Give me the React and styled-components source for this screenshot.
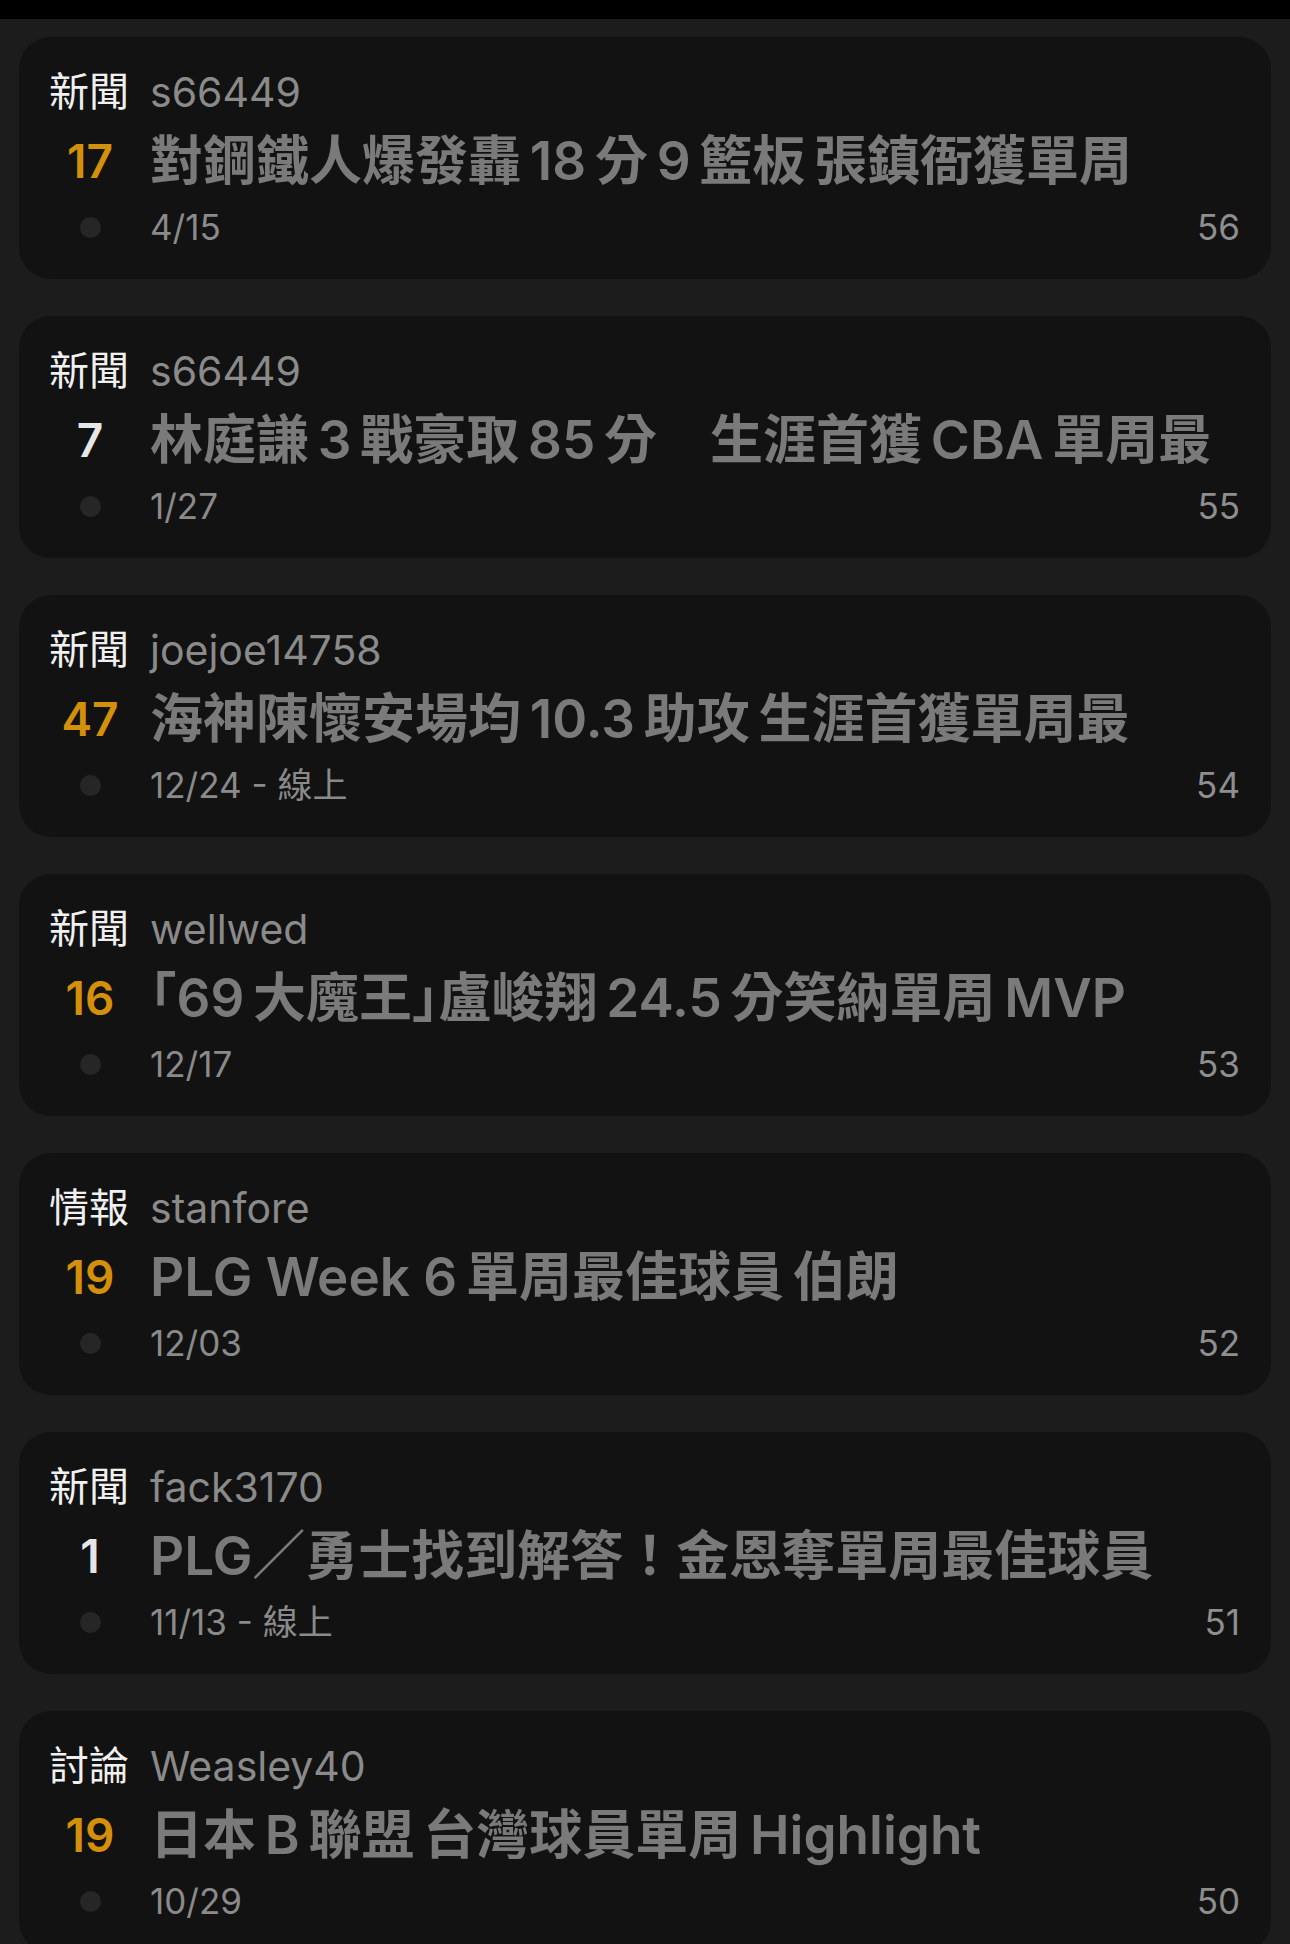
import React from "react";
import styled, { createGlobalStyle } from "styled-components";

const GlobalStyle = createGlobalStyle`
  html, body {
    margin: 0;
    padding: 0;
    background: #1c1c1c;
  }
  body {
    font-family: Inter, "Noto Sans CJK TC", "Noto Sans", sans-serif;
    -webkit-font-smoothing: antialiased;
  }
`;

const Page = styled.div`
  min-height: 1944px;
  background: #1c1c1c;
`;

const TopBar = styled.div`
  height: 19px;
  background: #000;
`;

const List = styled.div`
  display: flex;
  flex-direction: column;
  gap: 37px;
  padding: 18px 19px;
`;

const Card = styled.div`
  display: grid;
  grid-template-columns: 82px 1fr;
  grid-template-rows: 54px 64px 48px;
  column-gap: 19px;
  row-gap: 10px;
  height: 242px;
  box-sizing: border-box;
  padding: 28px 31px 0 30px;
  background: #121212;
  border-radius: 32px;
`;

const Category = styled.div`
  font-size: 40px;
  line-height: 54px;
  color: #f0f0f0;
  white-space: nowrap;
`;

const User = styled.div`
  font-size: 41px;
  line-height: 54px;
  color: #8a8a8a;
  white-space: nowrap;
`;

const Rank = styled.div`
  text-align: center;
  font-size: 46px;
  line-height: 64px;
  font-weight: 600;
  color: ${(p) => (p.$hot ? "#d4900b" : "#e6e6e6")};
`;

const Title = styled.div`
  font-size: 53px;
  line-height: 64px;
  font-weight: 600;
  color: #7a7a7a;
  white-space: pre;
  overflow: hidden;
`;

const Bracket = styled.span`
  font-feature-settings: "halt";
`;

const DotCell = styled.div`
  display: flex;
  align-items: center;
  justify-content: center;
`;

const Dot = styled.span`
  width: 21px;
  height: 21px;
  border-radius: 50%;
  background: #262626;
`;

const MetaRow = styled.div`
  display: flex;
  align-items: center;
  justify-content: space-between;
  font-size: 35px;
  line-height: 48px;
  color: #8a8a8a;
`;

const Count = styled.span`
  color: #8e8e8e;
`;

const items = [
  { cat: "新聞", user: "s66449", rank: 17, hot: true, title: "對鋼鐵人爆發轟 18 分 9 籃板 張鎮衙獲單周", date: "4/15", count: 56 },
  { cat: "新聞", user: "s66449", rank: 7, hot: false, title: "林庭謙 3 戰豪取 85 分　生涯首獲 CBA 單周最", date: "1/27", count: 55 },
  { cat: "新聞", user: "joejoe14758", rank: 47, hot: true, title: "海神陳懷安場均 10.3 助攻 生涯首獲單周最", date: "12/24 - 線上", count: 54 },
  { cat: "新聞", user: "wellwed", rank: 16, hot: true, title: "「69 大魔王」盧峻翔 24.5 分笑納單周 MVP", date: "12/17", count: 53 },
  { cat: "情報", user: "stanfore", rank: 19, hot: true, title: "PLG Week 6 單周最佳球員 伯朗", date: "12/03", count: 52 },
  { cat: "新聞", user: "fack3170", rank: 1, hot: false, title: "PLG／勇士找到解答！金恩奪單周最佳球員", date: "11/13 - 線上", count: 51 },
  { cat: "討論", user: "Weasley40", rank: 19, hot: true, title: "日本 B 聯盟 台灣球員單周 Highlight", date: "10/29", count: 50 },
];

const isLatin = (c) => /[0-9A-Za-z.]/.test(c || "");

// narrow spacing between CJK and latin, like iOS text autospace
const spaceText = (s) =>
  s.replace(/ /g, (m, off, str) =>
    isLatin(str[off - 1]) && isLatin(str[off + 1]) ? " " : "\u2009"
  );

const renderTitle = (s) =>
  spaceText(s)
    .split(/([「」])/)
    .map((part, i) =>
      part === "「" || part === "」" ? <Bracket key={i}>{part}</Bracket> : part
    );

export default function App() {
  return (
    <Page>
      <GlobalStyle />
      <TopBar />
      <List>
        {items.map((it, i) => (
          <Card key={i}>
            <Category>{it.cat}</Category>
            <User>{it.user}</User>
            <Rank $hot={it.hot}>{it.rank}</Rank>
            <Title>{renderTitle(it.title)}</Title>
            <DotCell>
              <Dot />
            </DotCell>
            <MetaRow>
              <span>{it.date}</span>
              <Count>{it.count}</Count>
            </MetaRow>
          </Card>
        ))}
      </List>
    </Page>
  );
}
